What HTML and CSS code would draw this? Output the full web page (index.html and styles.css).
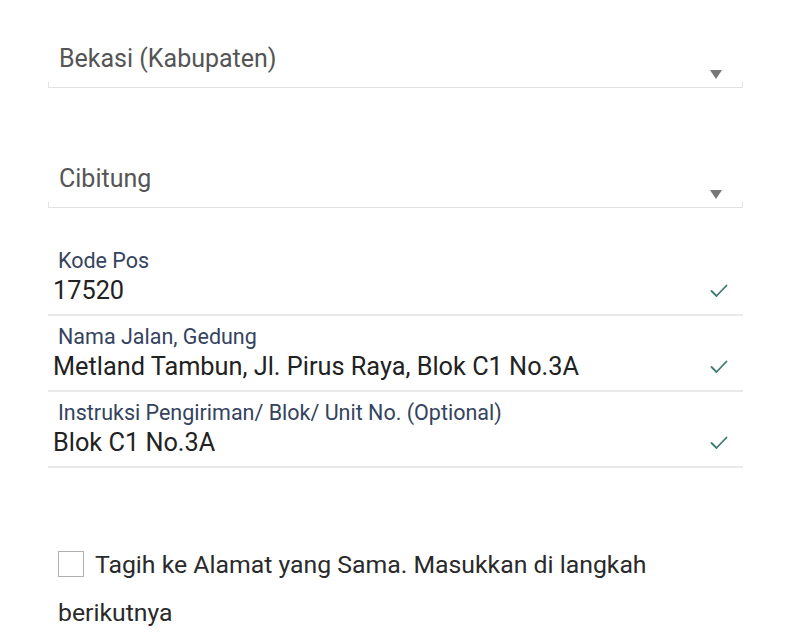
FILE: index.html
```html
<!DOCTYPE html>
<html lang="id">
<head>
  <meta charset="UTF-8">
  <meta name="viewport" content="width=device-width, initial-scale=1">
  <title>Alamat Pengiriman</title>
  <link rel="stylesheet" href="styles.css">
</head>
<body>
  <form class="address-form">
    <div class="select">
      <div class="select-row">
        <span class="select-value">Bekasi (Kabupaten)</span>
        <span class="select-arrow"></span>
      </div>
      <div class="select-line"></div>
    </div>

    <div class="select">
      <div class="select-row">
        <span class="select-value">Cibitung</span>
        <span class="select-arrow"></span>
      </div>
      <div class="select-line"></div>
    </div>

    <div class="fields">
      <div class="field">
        <div class="field-body">
          <label class="field-label">Kode Pos</label>
          <div class="field-value">17520</div>
        </div>
        <svg class="check" width="18" height="14" viewBox="0 0 18 14"><polyline points="1.5,7 6.5,12 16.5,1.5" fill="none" stroke="#3e7a70" stroke-width="1.8" stroke-linecap="round" stroke-linejoin="round"/></svg>
      </div>
      <div class="field">
        <div class="field-body">
          <label class="field-label">Nama Jalan, Gedung</label>
          <div class="field-value">Metland Tambun, Jl. Pirus Raya, Blok C1 No.3A</div>
        </div>
        <svg class="check" width="18" height="14" viewBox="0 0 18 14"><polyline points="1.5,7 6.5,12 16.5,1.5" fill="none" stroke="#3e7a70" stroke-width="1.8" stroke-linecap="round" stroke-linejoin="round"/></svg>
      </div>
      <div class="field">
        <div class="field-body">
          <label class="field-label">Instruksi Pengiriman/ Blok/ Unit No. (Optional)</label>
          <div class="field-value">Blok C1 No.3A</div>
        </div>
        <svg class="check" width="18" height="14" viewBox="0 0 18 14"><polyline points="1.5,7 6.5,12 16.5,1.5" fill="none" stroke="#3e7a70" stroke-width="1.8" stroke-linecap="round" stroke-linejoin="round"/></svg>
      </div>
    </div>

    <p class="same-address">
      <span class="checkbox"></span>Tagih ke Alamat yang Sama. Masukkan di langkah berikutnya
    </p>
  </form>
</body>
</html>
```

FILE: styles.css
```css
* {
  margin: 0;
  padding: 0;
  box-sizing: border-box;
}

body {
  background: #ffffff;
  font-family: Roboto, 'Liberation Sans', sans-serif;
  color: #222;
  overflow: hidden;
}

.address-form {
  width: 695px;
  margin-left: 48px;
  padding-top: 30px;
}

/* dropdowns */
.select + .select {
  margin-top: 62px;
}

.select-row {
  display: flex;
  align-items: flex-end;
  justify-content: space-between;
  padding: 14px 21px 0 11px;
}

.select-value {
  font-size: 25px;
  line-height: 30px;
  color: #555;
  margin-bottom: 8px;
}

.select-arrow {
  width: 0;
  height: 0;
  border-left: 6px solid transparent;
  border-right: 6px solid transparent;
  border-top: 9px solid #777;
  margin-bottom: 3px;
}

.select-line {
  height: 6px;
  border: 1px solid #e2e2e2;
  border-top: none;
}

/* text inputs */
.fields {
  margin-top: 32px;
}

.field {
  display: flex;
  align-items: flex-end;
  justify-content: space-between;
  padding: 9px 15px 8px 5px;
  border-bottom: 2px solid #e9e9e9;
}

.field-label {
  display: block;
  font-size: 21.5px;
  line-height: 24px;
  color: #34435e;
  margin-left: 5px;
}

.field-value {
  font-size: 25.3px;
  line-height: 30px;
  margin-top: 3px;
  color: #222;
}

.check {
  margin-bottom: 8px;
}

/* billing checkbox */
.same-address {
  margin-top: 73px;
  padding-left: 10px;
  font-size: 24.8px;
  line-height: 48px;
  color: #2a2a2a;
}

.checkbox {
  display: inline-block;
  width: 26px;
  height: 26px;
  border: 1px solid #b0b0b0;
  vertical-align: -4px;
  margin-right: 11px;
}
```
